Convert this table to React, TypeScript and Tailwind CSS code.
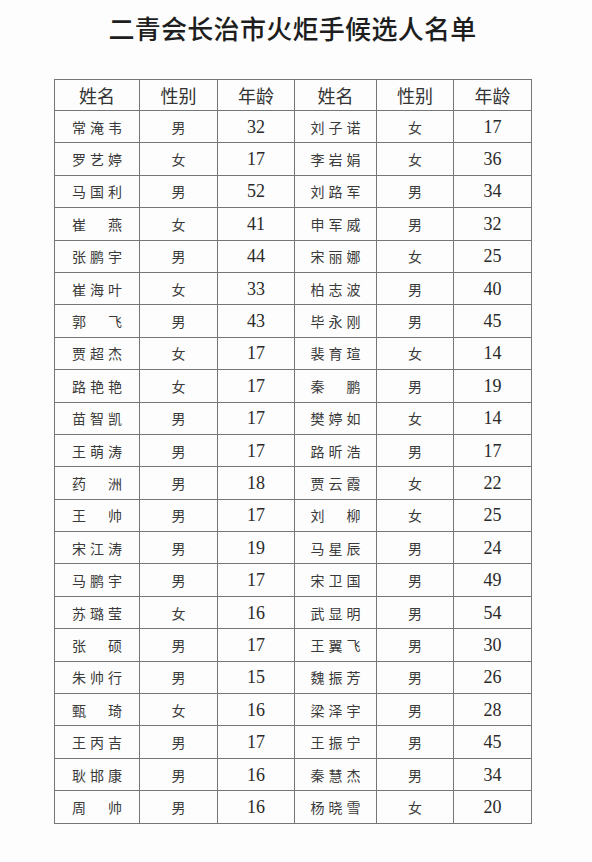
const rows: [string, string, string, string, string, string][] = [
  ['常淹韦', '男', '32', '刘子诺', '女', '17'],
  ['罗艺婷', '女', '17', '李岩娟', '女', '36'],
  ['马国利', '男', '52', '刘路军', '男', '34'],
  ['崔燕', '女', '41', '申军威', '男', '32'],
  ['张鹏宇', '男', '44', '宋丽娜', '女', '25'],
  ['崔海叶', '女', '33', '柏志波', '男', '40'],
  ['郭飞', '男', '43', '毕永刚', '男', '45'],
  ['贾超杰', '女', '17', '裴育瑄', '女', '14'],
  ['路艳艳', '女', '17', '秦鹏', '男', '19'],
  ['苗智凯', '男', '17', '樊婷如', '女', '14'],
  ['王萌涛', '男', '17', '路昕浩', '男', '17'],
  ['药洲', '男', '18', '贾云霞', '女', '22'],
  ['王帅', '男', '17', '刘柳', '女', '25'],
  ['宋江涛', '男', '19', '马星辰', '男', '24'],
  ['马鹏宇', '男', '17', '宋卫国', '男', '49'],
  ['苏璐莹', '女', '16', '武显明', '男', '54'],
  ['张硕', '男', '17', '王翼飞', '男', '30'],
  ['朱帅行', '男', '15', '魏振芳', '男', '26'],
  ['甄琦', '女', '16', '梁泽宇', '男', '28'],
  ['王丙吉', '男', '17', '王振宁', '男', '45'],
  ['耿邯康', '男', '16', '秦慧杰', '男', '34'],
  ['周帅', '男', '16', '杨晓雪', '女', '20'],
];

const cjk = { fontFamily: '"Noto Sans CJK SC", sans-serif' };
const serif = { fontFamily: '"Liberation Serif", "Noto Sans CJK SC", serif' };

function Name({ text }: { text: string }) {
  // two-character names are spread over the width of three
  return (
    <span className="inline-flex w-[50px] justify-between text-[14px] leading-none text-[#3a3a3a]" style={cjk}>
      {text.split('').map((c, i) => (
        <span key={i}>{c}</span>
      ))}
    </span>
  );
}

const cell = 'border-[1.5px] border-[#767676] p-0 text-center align-middle';

export default function App() {
  return (
    <div className="min-h-[862px] w-[592px] bg-[#fdfdfd]">
      <div className="ml-[54px] w-[477px] pt-[12px]">
        <h1
          className="text-center text-[26px] leading-[32px] font-medium tracking-[0.3px] text-[#1e1e1e]"
          style={cjk}
        >
          二青会长治市火炬手候选人名单
        </h1>
        <table className="mt-[35px] w-[477px] table-fixed border-collapse">
          <colgroup>
            <col className="w-[85px]" />
            <col className="w-[78px]" />
            <col className="w-[77px]" />
            <col className="w-[82px]" />
            <col className="w-[77px]" />
            <col className="w-[78px]" />
          </colgroup>
          <thead>
            <tr className="h-[31px]">
              {['姓名', '性别', '年龄', '姓名', '性别', '年龄'].map((h, i) => (
                <th
                  key={i}
                  className={`${cell} text-[18px] leading-none font-normal text-[#333]`}
                  style={cjk}
                >
                  {h}
                </th>
              ))}
            </tr>
          </thead>
          <tbody>
            {rows.map((r, i) => (
              <tr key={i} className="h-[32.4px]">
                <td className={cell}>
                  <Name text={r[0]} />
                </td>
                <td className={`${cell} text-[14px] leading-none text-[#3a3a3a]`} style={cjk}>
                  {r[1]}
                </td>
                <td className={`${cell} text-[18px] leading-none text-[#2a2a2a]`} style={serif}>
                  {r[2]}
                </td>
                <td className={cell}>
                  <Name text={r[3]} />
                </td>
                <td className={`${cell} text-[14px] leading-none text-[#3a3a3a]`} style={cjk}>
                  {r[4]}
                </td>
                <td className={`${cell} text-[18px] leading-none text-[#2a2a2a]`} style={serif}>
                  {r[5]}
                </td>
              </tr>
            ))}
          </tbody>
        </table>
      </div>
    </div>
  );
}
